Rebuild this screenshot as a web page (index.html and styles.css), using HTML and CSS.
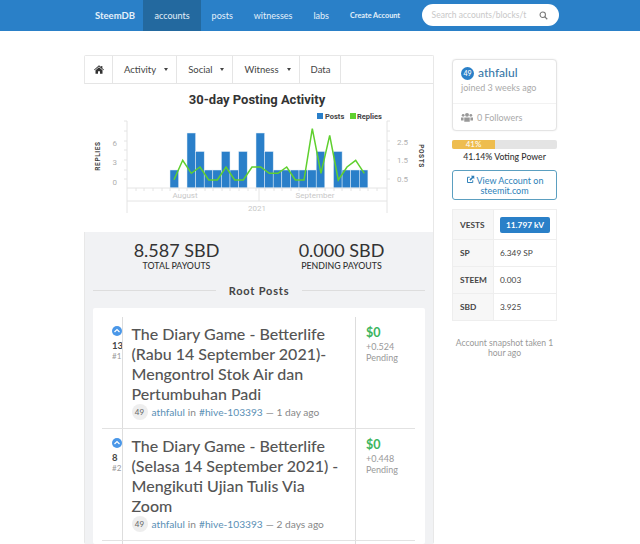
FILE: index.html
```html
<!DOCTYPE html>
<html lang="en">
<head>
  <meta charset="UTF-8" />
  <title>athfalul - SteemDB</title>
  <link rel="stylesheet" href="styles.css">
</head>
<body>
  <nav class="navbar">
    <a class="brand" href="#">SteemDB</a>
    <a class="nav-link active" href="#">accounts</a>
    <a class="nav-link" href="#">posts</a>
    <a class="nav-link" href="#">witnesses</a>
    <a class="nav-link" href="#">labs</a>
    <a class="nav-link small" href="#">Create Account</a>
    <div class="search">
      <span class="search-text">Search accounts/blocks/t</span>
      <svg class="search-icon" viewBox="0 0 12 12" width="9" height="9"><circle cx="5" cy="5" r="3.6" fill="none" stroke="#777" stroke-width="1.4"/><path d="M7.6 7.6L11 11" stroke="#777" stroke-width="1.6"/></svg>
    </div>
  </nav>

  <div class="page">
    <main class="main">
      <div class="tabs">
        <a class="tab tab-home" href="#"><svg viewBox="0 0 12 10" width="10" height="9"><path d="M6 0L0 5.2l.7.7L6 1.5l5.3 4.4.7-.7-2-1.7V.8H8.6v1.2zM1.8 6v4h3V7h2.400v3h3V6L6 2.400z" fill="#333"/></svg></a>
        <a class="tab caret" href="#">Activity</a>
        <a class="tab caret" href="#">Social</a>
        <a class="tab caret" href="#">Witness</a>
        <a class="tab" href="#">Data</a>
      </div>

      <div class="chart-box">
        <svg class="chart" viewBox="0 0 350 148" width="350" height="148">
          <text x="173" y="20" class="chart-title" text-anchor="middle">30-day Posting Activity</text>
          <rect x="233" y="29" width="6" height="6" fill="#2a7fc9"/>
          <text x="241" y="35" class="legend">Posts</text>
          <rect x="266" y="29" width="6" height="6" fill="#5fd02e"/>
          <text x="273" y="35" class="legend">Replies</text>

          <text class="axis-name" transform="translate(16,72) rotate(-90)" text-anchor="middle">REPLIES</text>
          <text class="axis-name" transform="translate(335,72) rotate(90)" text-anchor="middle">POSTS</text>
          <text x="33" y="62" class="tick" text-anchor="end">6</text>
          <text x="33" y="81" class="tick" text-anchor="end">3</text>
          <text x="33" y="101" class="tick" text-anchor="end">0</text>
          <text x="313" y="61" class="tick">2.5</text>
          <text x="313" y="79" class="tick">1.5</text>
          <text x="313" y="98" class="tick">0.5</text>

          <g fill="#2a7fc9" stroke="#e3eef7" stroke-width="0.5">
            <rect x="86" y="86" width="8.600" height="18"/>
            <rect x="103" y="49" width="8.600" height="55"/>
            <rect x="111.600" y="67.500" width="8.600" height="36.500"/>
            <rect x="120.200" y="86" width="8.600" height="18"/>
            <rect x="128.800" y="86" width="8.600" height="18"/>
            <rect x="137.400" y="67.500" width="8.600" height="36.500"/>
            <rect x="146" y="86" width="8.600" height="18"/>
            <rect x="154.600" y="67.500" width="8.600" height="36.500"/>
            <rect x="172" y="49" width="8.600" height="55"/>
            <rect x="180.600" y="67.500" width="8.600" height="36.500"/>
            <rect x="189.200" y="86" width="8.600" height="18"/>
            <rect x="197.800" y="86" width="8.600" height="18"/>
            <rect x="206.400" y="86" width="8.600" height="18"/>
            <rect x="215" y="86" width="8.600" height="18"/>
            <rect x="223.600" y="86" width="8.600" height="18"/>
            <rect x="232.200" y="67.500" width="8.600" height="36.500"/>
            <rect x="249.500" y="67.500" width="8.600" height="36.500"/>
            <rect x="258.100" y="86" width="8.600" height="18"/>
            <rect x="266.700" y="86" width="8.600" height="18"/>
            <rect x="275.300" y="86" width="8.600" height="18"/>
          </g>
          <polyline fill="none" stroke="#5fd02e" stroke-width="1.500" points="90,95.700 98.700,76.300 107.300,89.300 116,83 124.700,96 133.300,96 142,83 150.700,96 159.300,96 168,83 176.700,83 185.300,89.300 194,89.300 202.700,83 211.300,96 220,96 228.300,44.700 237,89.300 245.700,51.300 254.300,96 263,83 271.700,76.300 280.300,89.300"/>

          <g stroke="#e4e4e4" fill="none">
            <path d="M43 37V129M303 37V129M43 104H303M43 117H303M175 104V117"/>
            <path d="M40 37H43M40 47H43M40 57H43M40 66H43M40 76H43M40 86H43M40 95H43M303 37H306M303 47H306M303 57H306M303 66H306M303 76H306M303 86H306M303 95H306"/>
            <path d="M52 104v3M60 104v3M69 104v3M78 104v3M86 104v3M95 104v3M103 104v3M112 104v3M121 104v3M129 104v3M138 104v3M146 104v3M155 104v3M164 104v3M172 104v3M181 104v3M190 104v3M198 104v3M207 104v3M215 104v3M224 104v3M233 104v3M241 104v3M250 104v3M258 104v3M267 104v3M276 104v3M284 104v3M293 104v3"/>
          </g>
          <text x="101" y="114" class="tick light" text-anchor="middle">August</text>
          <text x="231" y="114" class="tick light" text-anchor="middle">September</text>
          <text x="173" y="127" class="tick light" text-anchor="middle">2021</text>
        </svg>
      </div>

      <div class="stats">
        <div class="payouts">
          <div class="payout">
            <div class="payout-value">8.587 SBD</div>
            <div class="payout-label">TOTAL PAYOUTS</div>
          </div>
          <div class="payout">
            <div class="payout-value">0.000 SBD</div>
            <div class="payout-label">PENDING PAYOUTS</div>
          </div>
        </div>

        <div class="divider"><span>Root Posts</span></div>

        <div class="posts-card">
          <div class="post-row">
            <div class="post-votes">
              <span class="up-icon"><svg viewBox="0 0 10 10" width="10" height="10"><path d="M2.500 6L5 3.500 7.500 6" fill="none" stroke="#fff" stroke-width="1.200"/></svg></span>
              <b>13</b>
              <span class="rank">#1</span>
            </div>
            <div class="post-body">
              <h3>The Diary Game - Betterlife (Rabu 14 September 2021)- Mengontrol Stok Air dan Pertumbuhan Padi</h3>
              <div class="post-meta"><span class="rep">49</span> <a href="#">athfalul</a> in <a href="#">#hive-103393</a> — 1 day ago</div>
            </div>
            <div class="post-pay">
              <div class="pay-main">$0</div>
              <div>+0.524</div>
              <div>Pending</div>
            </div>
          </div>

          <div class="post-row">
            <div class="post-votes">
              <span class="up-icon"><svg viewBox="0 0 10 10" width="10" height="10"><path d="M2.500 6L5 3.500 7.500 6" fill="none" stroke="#fff" stroke-width="1.200"/></svg></span>
              <b>8</b>
              <span class="rank">#2</span>
            </div>
            <div class="post-body">
              <h3>The Diary Game - Betterlife (Selasa 14 September 2021) - Mengikuti Ujian Tulis Via Zoom</h3>
              <div class="post-meta"><span class="rep">49</span> <a href="#">athfalul</a> in <a href="#">#hive-103393</a> — 2 days ago</div>
            </div>
            <div class="post-pay">
              <div class="pay-main">$0</div>
              <div>+0.448</div>
              <div>Pending</div>
            </div>
          </div>

          <div class="post-row last">
            <div></div>
            <div class="post-body"></div>
            <div></div>
          </div>
        </div>
      </div>
    </main>

    <aside class="side">
      <div class="profile">
        <div class="profile-top">
          <div class="profile-name"><span class="badge">49</span> athfalul</div>
          <div class="joined">joined 3 weeks ago</div>
        </div>
        <div class="followers">
          <svg viewBox="0 0 14 11" width="12" height="10"><g fill="#999"><circle cx="7" cy="3" r="2.300"/><circle cx="2.500" cy="3.500" r="1.600"/><circle cx="11.500" cy="3.500" r="1.600"/><path d="M3.800 6h6.400v5H3.800zM0 6h3v3.500H0zM11 6h3v3.500h-3z"/></g></svg>
          0 Followers
        </div>
      </div>

      <div class="power-bar"><div class="power-fill" style="width: 41.14%">41%</div></div>
      <div class="power-text">41.14% Voting Power</div>

      <a class="view-btn" href="#"><svg viewBox="0 0 12 12" width="9" height="9"><path d="M9 7v3H2V3h3" fill="none" stroke="#2d7fb8" stroke-width="1.300"/><path d="M6.500 1H11v4.500L9.500 4 6 7.500 4.500 6 8 2.500z" fill="#2d7fb8"/></svg> View Account on steemit.com</a>

      <table class="balances">
        <tr class="first"><th>VESTS</th><td><span class="vests">11.797 kV</span></td></tr>
        <tr><th>SP</th><td>6.349 SP</td></tr>
        <tr><th>STEEM</th><td>0.003</td></tr>
        <tr><th>SBD</th><td>3.925</td></tr>
      </table>

      <p class="snapshot">Account snapshot taken 1 hour ago</p>
    </aside>
  </div>
</body>
</html>
```

FILE: styles.css
```css
html, body {
  height: 544px;
  overflow: hidden;
}
body {
  font-family: Lato, "Open Sans", sans-serif;
  background-color: #fff;
  margin: 0;
  color: #333;
}
a {
  text-decoration: none;
}

.navbar {
  display: flex;
  align-items: stretch;
  height: 31px;
  padding-left: 84px;
  background-color: #2a80c8;
}
.brand, .nav-link {
  display: flex;
  align-items: center;
  color: #e4f0fa;
  font-size: 9px;
}
.brand {
  padding: 0 11px;
  font-size: 9.500px;
  font-weight: 700;
  width: 37px;
  white-space: nowrap;
}
.nav-link {
  padding: 0 10.500px;
}
.nav-link.active {
  background-color: #23699f;
  padding: 0 11.500px;
}
.nav-link.small {
  font-size: 7.300px;
  font-weight: 700;
}
.search {
  display: flex;
  align-items: center;
  justify-content: space-between;
  width: 137px;
  height: 22px;
  box-sizing: border-box;
  margin: 4px 0 0 11px;
  padding: 0 11px 0 10px;
  background: #fff;
  border-radius: 11px;
}
.search-text {
  color: #c8c8c8;
  font-size: 8.500px;
  white-space: nowrap;
}

.page {
  display: flex;
  align-items: flex-start;
  gap: 18px;
  padding: 24px 84px 0;
}
.main {
  width: 350px;
  flex: none;
  box-sizing: border-box;
  border: 1px solid #e8e8e8;
  border-bottom: none;
  border-radius: 2px;
}

.tabs {
  display: flex;
  height: 27px;
  background: #fff;
  border-bottom: 1px solid #e5e5e5;
}
.tab {
  display: flex;
  align-items: center;
  padding: 0 10px 0 11px;
  color: #444;
  font-size: 9.500px;
  border-right: 1px solid #e5e5e5;
}
.tab.caret {
  padding-right: 8px;
}
.tab-home {
  padding: 0 8.500px;
}
.caret::after {
  content: "";
  margin-left: 8px;
  border-left: 2.500px solid transparent;
  border-right: 2.500px solid transparent;
  border-top: 3px solid #444;
}

.chart-box {
  height: 148px;
  margin-left: -1px;
  background: #fff;
}
.chart {
  display: block;
}
.chart-title {
  font-family: Roboto, sans-serif;
  font-size: 13px;
  font-weight: 700;
  fill: #333;
}
.legend {
  font-family: Roboto, sans-serif;
  font-size: 7.500px;
  font-weight: 700;
  fill: #444;
}
.axis-name {
  font-family: Roboto, sans-serif;
  font-size: 6.500px;
  font-weight: 700;
  letter-spacing: 0.600px;
  fill: #444;
}
.tick {
  font-family: Roboto, sans-serif;
  font-size: 8px;
  fill: #b0b0b0;
}
.tick.light {
  fill: #c8c8c8;
}

.stats {
  box-sizing: border-box;
  height: 312px;
  overflow: hidden;
  background-color: #f1f2f4;
  padding: 8px 8px 0;
}
.payouts {
  display: grid;
  grid-template-columns: 165px 165px;
  margin-left: 1px;
}
.payout {
  text-align: center;
}
.payout-value {
  font-size: 18px;
  line-height: 21px;
}
.payout-label {
  font-size: 8.800px;
  font-weight: 500;
  line-height: 10px;
}
.divider {
  display: flex;
  align-items: center;
  gap: 13px;
  margin-top: 13px;
  font-size: 11px;
  font-weight: 700;
  letter-spacing: 0.800px;
  color: #444;
}
.divider::before, .divider::after {
  content: "";
  flex: 1;
  border-top: 1px solid #ddd;
}

.posts-card {
  box-sizing: border-box;
  background: #fff;
  margin-top: 11px;
  padding: 9px 10px 0 9px;
  height: 236px;
  border-radius: 2px;
}
.post-row {
  display: grid;
  grid-template-columns: 20px 234px 59px;
  border-bottom: 1px solid #e2e2e2;
}
.post-row.last {
  height: 3px;
  border-bottom: none;
}
.post-votes {
  padding-top: 9px;
  font-size: 8px;
  line-height: 11px;
  margin-left: 10px;
  overflow: hidden;
  width: 10px;
}
.post-votes b {
  display: block;
  font-size: 9.500px;
  color: #444;
  margin-top: 4px;
}
.rank {
  display: block;
  color: #999;
}
.up-icon {
  display: flex;
  width: 10px;
  height: 10px;
  border-radius: 50%;
  background: #4a97e8;
}
.post-body {
  padding: 7px 8px 8px 8.500px;
  border-left: 1px solid #ddd;
  border-right: 1px solid #ddd;
}
.last .post-body {
  padding: 0;
}
.post-body h3 {
  margin: 0;
  font-size: 16px;
  font-weight: 500;
  line-height: 20px;
  color: #555;
}
.post-meta {
  display: flex;
  align-items: center;
  gap: 3px;
  height: 16px;
  margin-top: 0;
  font-size: 10.200px;
  color: #888;
  white-space: nowrap;
}
.post-meta a {
  color: #5a8fb5;
}
.rep {
  display: inline-block;
  width: 16px;
  height: 16px;
  line-height: 16px;
  margin-right: 1px;
  border-radius: 50%;
  background: #eee;
  color: #666;
  font-size: 8px;
  text-align: center;
}
.post-pay {
  padding: 9px 0 0 10px;
  font-size: 9px;
  line-height: 11px;
  color: #999;
}
.pay-main {
  font-size: 12.500px;
  font-weight: 700;
  line-height: 14px;
  color: #3cb55e;
  margin-bottom: 1px;
}

.side {
  width: 105px;
  flex: none;
  margin-top: 4px;
}
.profile {
  border: 1px solid #e4e4e4;
  border-radius: 4px;
  box-shadow: 0 0 2px rgba(0,0,0,0.08);
  background: #fff;
}
.profile-top {
  padding: 5px 8px 9px;
  border-bottom: 1px solid #f2f2f2;
  height: 29px;
}
.profile-name {
  display: flex;
  align-items: center;
  gap: 4px;
  font-size: 12px;
  font-weight: 500;
  line-height: 16px;
  color: #3a78a8;
}
.badge {
  width: 13px;
  height: 13px;
  line-height: 13px;
  border-radius: 50%;
  background: #2a80c8;
  color: #fff;
  font-size: 7px;
  text-align: center;
}
.joined {
  font-size: 9px;
  line-height: 13px;
  color: #aaa;
  white-space: nowrap;
}
.followers {
  display: flex;
  align-items: center;
  gap: 4px;
  height: 26px;
  padding-left: 8px;
  font-size: 9px;
  color: #aaa;
}

.power-bar {
  height: 9px;
  margin-top: 9px;
  background: #e4e4e4;
  border-radius: 2px;
  overflow: hidden;
}
.power-fill {
  height: 100%;
  background: #eebd4f;
  color: #fff;
  font-size: 8px;
  line-height: 9px;
  text-align: center;
}
.power-text {
  margin-top: 2px;
  font-size: 8.700px;
  font-weight: 500;
  line-height: 12px;
  text-align: center;
  white-space: nowrap;
}

.view-btn {
  display: block;
  margin-top: 7px;
  padding: 4px 6px;
  height: 20px;
  border: 1px solid #5b9fc0;
  border-radius: 3px;
  color: #2d7fb8;
  font-size: 9px;
  line-height: 10px;
  text-align: center;
}

.balances {
  width: 100%;
  margin-top: 9px;
  border-collapse: collapse;
  font-size: 8.300px;
}
.balances th, .balances td {
  border: 1px solid #eee;
  height: 26px;
  padding: 0 0 0 7px;
  text-align: left;
  color: #444;
}
.balances .first th, .balances .first td {
  height: 29px;
}
.balances th {
  width: 33px;
  background: #f7f7f7;
  font-weight: 700;
}
.balances td {
  padding-left: 6px;
  white-space: nowrap;
}
.vests {
  display: inline-block;
  width: 50px;
  height: 16px;
  line-height: 16px;
  border-radius: 2px;
  background: #2a80c8;
  color: #fff;
  font-weight: 700;
  font-size: 8.300px;
  text-align: center;
  vertical-align: middle;
}
.snapshot {
  margin: 17px 0 0;
  font-size: 8.600px;
  line-height: 10px;
  text-align: center;
  color: #999;
}
```
